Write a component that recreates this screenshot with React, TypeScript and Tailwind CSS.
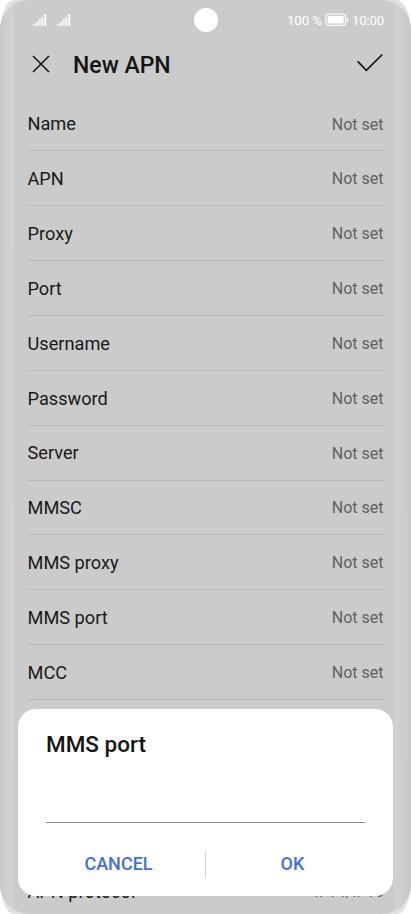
const settings = [
  { label: "Name", value: "Not set" },
  { label: "APN", value: "Not set" },
  { label: "Proxy", value: "Not set" },
  { label: "Port", value: "Not set" },
  { label: "Username", value: "Not set" },
  { label: "Password", value: "Not set" },
  { label: "Server", value: "Not set" },
  { label: "MMSC", value: "Not set" },
  { label: "MMS proxy", value: "Not set" },
  { label: "MMS port", value: "Not set" },
  { label: "MCC", value: "Not set" },
];

const Signal = () => (
  <svg width="14" height="13" viewBox="0 0 14 13" fill="#fafafa">
    <rect x="0.6" y="9.6" width="1.8" height="2.4" />
    <rect x="3.1" y="7.8" width="1.8" height="4.2" />
    <rect x="5.7" y="5.2" width="1.8" height="6.8" />
    <rect x="8.3" y="3" width="1.8" height="9" />
    <rect x="11.1" y="0.2" width="2" height="11.8" />
  </svg>
);

const Battery = () => (
  <svg width="24" height="14" viewBox="0 0 24 14" fill="none">
    <rect x="0.9" y="1.2" width="19.6" height="11.2" rx="2.6" stroke="#f6f6f6" strokeWidth="1.3" />
    <rect x="2.7" y="3" width="16" height="7.6" rx="0.8" fill="#fff" />
    <path d="M22.4 4.6v4.4" stroke="#f6f6f6" strokeWidth="1.5" />
  </svg>
);

const StatusBar = () => (
  <div className="flex h-10 shrink-0 items-center justify-between pl-[33px] pr-[27px] text-[13.3px] text-white">
    <div className="flex gap-[9.5px]">
      <Signal />
      <Signal />
    </div>
    <div className="flex items-center pt-px">
      <span className="tracking-[-0.1px]">100 %</span>
      <span className="-mt-px ml-[3px] mr-[3px]">
        <Battery />
      </span>
      <span className="tracking-[-0.2px]">10:00</span>
    </div>
  </div>
);

const Header = () => (
  <header className="flex h-[56.6px] shrink-0 items-start pl-8 pr-[27px] text-[#151515]">
    <svg className="mt-[15px]" width="18" height="18" viewBox="0 0 18 18" fill="none" stroke="currentColor" strokeWidth="1.6">
      <path d="M1 1l16 16M17 1L1 17" />
    </svg>
    <h1 className="ml-[23px] mt-[10px] text-[23px] leading-8 font-medium">New APN</h1>
    <svg className="ml-auto mt-[13px]" width="27" height="20" viewBox="0 0 27 20" fill="none" stroke="currentColor" strokeWidth="1.7">
      <path d="M0.7 8.4L9.3 17.3L25.3 1.5" />
    </svg>
  </header>
);

const Row = ({ label, value }: { label: string; value: string }) => (
  <li className="flex h-[54.85px] items-center justify-between border-b border-[#b9b9b9] pt-[1px]">
    <span className="text-[18.2px] text-[#191919]">{label}</span>
    <span className="pt-[1px] text-[16px] text-[#606060]">{value}</span>
  </li>
);

const Dialog = () => (
  <section className="absolute left-[18px] top-[709px] flex h-[187px] w-[375px] flex-col rounded-[18px] bg-white px-7">
    <h2 className="mt-5 text-[22.5px] leading-[30px] font-medium text-[#151515]">MMS port</h2>
    <div className="mt-[33px] h-[31px] border-b border-[#8c8c8c]" />
    <div className="mt-[27px] flex h-7 items-center text-[18px] font-medium text-[#426fe0]">
      <button className="h-7 flex-1 pr-[14px] pb-px">CANCEL</button>
      <span className="h-[27px] w-px bg-[#d2d2d2]" />
      <button className="h-7 flex-1 pl-[14px] pb-px">OK</button>
    </div>
  </section>
);

const App = () => {
  return (
    <main className="relative h-[914px] w-[411px] overflow-hidden bg-white font-['Roboto','Liberation_Sans',sans-serif]">
      {/* phone frame */}
      <div className="absolute inset-0 rounded-[14px/34px] bg-[#e0e0e0]" />

      <div className="relative flex h-full flex-col overflow-hidden rounded-[30px] bg-[#cbcbcb]">
        <div className="absolute inset-y-0 left-0 w-[14px] bg-linear-to-r from-[#c8c8c8] via-[#cecece] to-[#d3d3d3]" />
        <div className="absolute inset-y-0 right-0 w-[17px] bg-linear-to-l from-[#c8c8c8] via-[#cccccc] to-[#d2d2d2]" />
        <div className="absolute left-[193.5px] top-2 size-6 rounded-full bg-white" />
        <StatusBar />
        <Header />
        <ul className="px-[27.5px]">
          {settings.map((item) => (
            <Row key={item.label} label={item.label} value={item.value} />
          ))}
        </ul>
        {/* rows in between are hidden by the dialog */}
        <ul className="mt-[164.5px] px-[27.5px]">
          <Row label="APN protocol" value="IPv4/IPv6" />
        </ul>
      </div>

      <Dialog />
    </main>
  );
};
export default App;
